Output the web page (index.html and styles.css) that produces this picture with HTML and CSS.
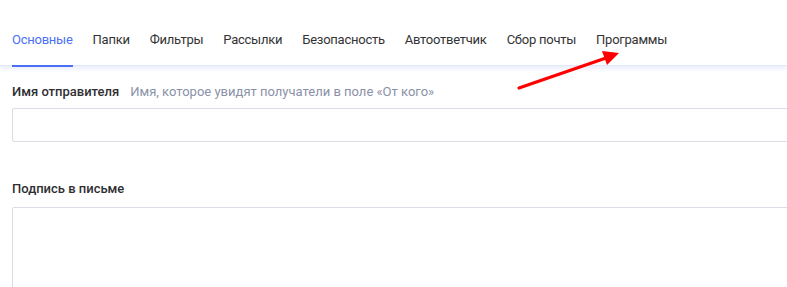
FILE: index.html
```html
<!DOCTYPE html>
<html lang="ru">
<head>
<meta charset="utf-8">
<link rel="stylesheet" href="styles.css">
</head>
<body>
<div class="page">
  <nav class="tabs">
    <a class="tab active">Основные</a>
    <a class="tab">Папки</a>
    <a class="tab">Фильтры</a>
    <a class="tab">Рассылки</a>
    <a class="tab">Безопасность</a>
    <a class="tab">Автоответчик</a>
    <a class="tab">Сбор почты</a>
    <a class="tab">Программы</a>
  </nav>
  <section class="form">
    <div class="label-row">
      <span class="label">Имя отправителя</span>
      <span class="hint">Имя, которое увидят получатели в поле «От кого»</span>
    </div>
    <div class="input"></div>
    <div class="label-row second">
      <span class="label">Подпись в письме</span>
    </div>
    <div class="textarea"></div>
  </section>
  <svg class="arrow" width="787" height="287" viewBox="0 0 787 287">
    <line x1="519" y1="88" x2="606" y2="58" stroke="#ff0000" stroke-width="3.2" stroke-linecap="round"/>
    <polygon points="619,53 602,51 607,65" fill="#ff0000"/>
  </svg>
</div>
</body>
</html>
```
FILE: styles.css
```css
html, body {
  margin: 0;
  padding: 0;
  background: #ffffff;
  overflow: hidden;
}
.page {
  position: relative;
  width: 787px;
  height: 287px;
  overflow: hidden;
  font-family: Roboto, "Liberation Sans", sans-serif;
  font-size: 13px;
  color: #333333;
}
.tabs {
  display: flex;
  gap: 20px;
  padding-left: 12px;
  height: 65px;
  border-bottom: 1px solid #e2e6fa;
  box-shadow: 0 3px 4px rgba(200, 208, 245, 0.35);
  box-sizing: content-box;
}
.tab {
  display: block;
  padding-top: 32px;
  line-height: 16px;
  height: 33px;
  border-bottom: 2px solid transparent;
  color: #333333;
  white-space: nowrap;
  font-size: 13px;
  letter-spacing: -0.25px;
}
.tab.active {
  color: #4a71f5;
  border-bottom-color: #4a6ff5;
}
.form {
  padding: 18px 0 0 12px;
}
.label-row {
  display: flex;
  gap: 11px;
  line-height: 16px;
}
.label-row.second {
  margin-top: 39px;
}
.label {
  font-weight: 500;
  color: #2f2f33;
}
.hint {
  color: #8a91a8;
}
.input {
  margin-top: 8px;
  width: 800px;
  height: 32px;
  border: 1px solid #dcdce6;
  border-radius: 2px;
}
.textarea {
  margin-top: 10px;
  width: 800px;
  height: 120px;
  border: 1px solid #dcdce6;
  border-radius: 2px;
}
.arrow {
  position: absolute;
  left: 0;
  top: 0;
  pointer-events: none;
}
```
